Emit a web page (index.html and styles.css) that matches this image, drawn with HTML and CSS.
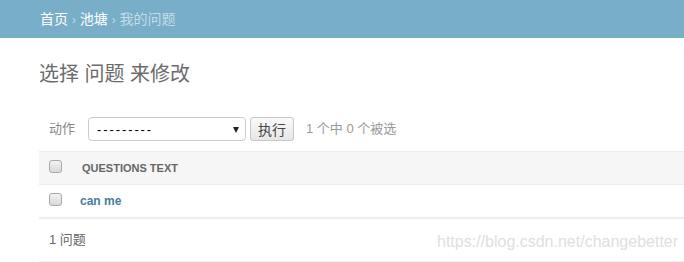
FILE: index.html
```html
<!DOCTYPE html>
<html lang="zh-CN">
  <head>
    <meta charset="UTF-8" />
    <title>选择 问题 来修改</title>
    <link rel="stylesheet" href="styles.css">
  </head>
  <body>
    <!-- 面包屑 -->
    <div class="breadcrumbs">
      <a href="#">首页</a> <span class="sep">›</span> <a href="#">池塘</a> <span class="sep">›</span> 我的问题
    </div>

    <!-- 内容 -->
    <div class="content">
      <h1>选择 问题 来修改</h1>

      <div class="actions">
        <span class="label">动作</span>
        <span class="select-wrap">
          <select name="action">
            <option value="">---------</option>
          </select>
        </span>
        <button type="button" class="btn">执行</button>
        <span class="counter">1 个中 0 个被选</span>
      </div>

      <table class="result-list">
        <thead>
          <tr>
            <th class="check"><input type="checkbox"></th>
            <th class="col-text">Questions text</th>
          </tr>
        </thead>
        <tbody>
          <tr>
            <td class="check"><input type="checkbox"></td>
            <th class="field"><a href="#">can me</a></th>
          </tr>
        </tbody>
      </table>

      <p class="paginator">1 问题</p>
    </div>

    <div class="watermark">https://blog.csdn.net/changebetter</div>
  </body>
</html>
```

FILE: styles.css
```css
/* 초기화 */
html,
body {
  margin: 0;
  padding: 0;
}

body {
  position: relative;
  overflow: hidden;
  font-family: "Liberation Sans", "Noto Sans CJK SC", sans-serif;
  color: #333;
  background-color: #fff;
}

a {
  text-decoration: none;
}

/* 面包屑 */
.breadcrumbs {
  height: 18px;
  padding: 10px 40px;
  background-color: #79aec8;
  color: #c4dce8;
  font-size: 14px;
  line-height: 18px;
}
.breadcrumbs a {
  color: #fff;
}
.breadcrumbs .sep {
  font-size: 12px;
}

/* 内容 */
.content {
  padding: 20px 0 0 39px;
}

h1 {
  margin: 0 0 17px;
  font-size: 20px;
  font-weight: normal;
  line-height: 32px;
  color: #6b6b6b;
}

/* 动作栏 */
.actions {
  display: flex;
  align-items: center;
  padding: 10px;
  line-height: 24px;
  font-size: 13px;
}
.actions .label {
  color: #888;
  margin-right: 13px;
}

.select-wrap {
  position: relative;
  display: block;
}
.select-wrap select {
  display: block;
  width: 158px;
  height: 24px;
  padding: 0 0 0 8px;
  border: 1px solid #ccc;
  border-radius: 4px;
  background-color: #fff;
  appearance: none;
  -webkit-appearance: none;
  font-family: "Liberation Sans", sans-serif;
  font-size: 13px;
  letter-spacing: 1.9px;
  color: #000;
}
/* 下拉箭头 */
.select-wrap::after {
  content: '';
  position: absolute;
  top: 10px;
  right: 7px;
  border-top: 6px solid #222;
  border-left: 3.5px solid transparent;
  border-right: 3.5px solid transparent;
}

.btn {
  height: 24px;
  margin-left: 4px;
  padding: 0 7px;
  border: 1px solid #c8c8c8;
  border-radius: 3px;
  background: linear-gradient(#fafafa, #e6e6e6);
  font-family: "Liberation Sans", "Noto Sans CJK SC", sans-serif;
  font-size: 14px;
  color: #444;
}

.counter {
  margin-left: 12px;
  color: #999;
}

/* 列表 */
.result-list {
  width: 100%;
  border-collapse: collapse;
}

.result-list thead th {
  height: 32px;
  padding: 0 10px;
  background-color: #f6f6f6;
  border-top: 1px solid #eee;
  border-bottom: 1px solid #eee;
  text-align: left;
  font-size: 11px;
  font-weight: bold;
  text-transform: uppercase;
  color: #666;
}

.result-list tbody td,
.result-list tbody th {
  height: 32px;
  padding: 0 8px;
  border-bottom: 1px solid #eee;
  text-align: left;
  font-size: 12px;
}

.result-list .check {
  width: 13px;
  padding: 0 10px;
  line-height: 0;
}
.result-list .field a {
  color: #447e9b;
  font-weight: bold;
}

/* 复选框 */
input[type="checkbox"] {
  appearance: none;
  -webkit-appearance: none;
  box-sizing: border-box;
  width: 13px;
  height: 13px;
  margin: 0;
  border: 1px solid #a9a9a9;
  border-radius: 3px;
  background: linear-gradient(#f2f2f2, #d9d9d9);
  vertical-align: middle;
}
.result-list thead input[type="checkbox"] {
  margin-top: -4px;
}
.result-list tbody input[type="checkbox"] {
  margin-top: -3px;
}

/* 分页 */
.paginator {
  margin: 0;
  padding: 10px;
  line-height: 22px;
  font-size: 13px;
  color: #666;
  border-top: 1px solid #eee;
  border-bottom: 1px solid #eee;
}

/* 水印 */
.watermark {
  position: absolute;
  left: 437px;
  top: 232px;
  font-family: "Liberation Sans", sans-serif;
  font-size: 16px;
  line-height: 20px;
  color: #e0e0e0;
}
```
